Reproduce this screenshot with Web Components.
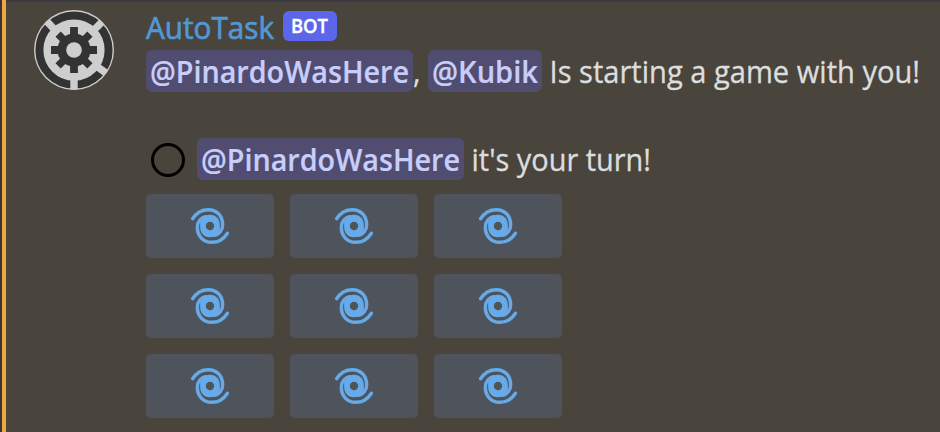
<!DOCTYPE html>
<html lang="en">
<head>
<meta charset="utf-8">
<title>AutoTask</title>
<style>
html,body{margin:0;height:100%;overflow:hidden;background:#49443c}
</style>
</head>
<body>
<chat-message></chat-message>
<script>
class BaseElement extends HTMLElement {
  constructor() {
    super();
    this.attachShadow({mode: 'open'}).innerHTML = this.constructor.html;
  }
}

// A single run of text, condensed so that it fills the given width.
class TextRun extends BaseElement {
  static html = `<style>:host{display:inline-block;white-space:pre;flex:none}span{display:inline-block;transform-origin:0 50%}</style><span><slot></slot></span>`;
  connectedCallback() {
    const width = Number(this.getAttribute('width'));
    const span = this.shadowRoot.querySelector('span');
    this.style.width = width + 'px';
    span.style.transform = `scaleX(${width / span.getBoundingClientRect().width})`;
  }
}
customElements.define('text-run', TextRun);

customElements.define('user-avatar', class extends BaseElement {
  static html = `<style>:host{display:block;width:80px;height:80px}svg{display:block}</style>
  <svg width="80" height="80" viewBox="-40 -40 80 80">
    <circle r="40" fill="#cecece"/>
    <circle r="34.6" fill="none" stroke="#333" stroke-width="8"/>
    <g stroke="#cecece" stroke-width="7.4">
      <path d="M0 28V39.5M20 -20L27.8 -27.8M-20 -21L-27 -28.5M23 16.5L32 23"/>
    </g>
    <g fill="#333">
      <circle r="16.6"/>
      <path d="M-3.9 -23H3.9V23H-3.9ZM-23 -3.9V3.9H23V-3.9Z"/>
      <path transform="rotate(45)" d="M-3.7 -22.5H3.7V22.5H-3.7ZM-22.5 -3.7V3.7H22.5V-3.7Z"/>
    </g>
    <circle r="7.8" fill="#cecece"/>
  </svg>`;
});

customElements.define('bot-tag', class extends BaseElement {
  static html = `<style>:host{display:flex;box-sizing:border-box;width:54px;height:30px;padding-left:8px;border-radius:6px;background:#5b66ea;color:#fff;font-size:20px;font-weight:600;line-height:30px;-webkit-text-stroke:.4px #fff}</style><text-run width="37">BOT</text-run>`;
});

customElements.define('user-mention', class extends BaseElement {
  static html = `<style>:host{display:flex;flex:none;box-sizing:border-box;height:42px;padding:0 4px;border-radius:6px;background:#504d70;color:#c9cdfb;font-weight:600;line-height:42px;-webkit-text-stroke:.2px currentColor}</style><slot></slot>`;
});

customElements.define('circle-emoji', class extends BaseElement {
  static html = `<style>:host{display:block;box-sizing:border-box;flex:none;width:34px;height:34px;border:3px solid #000;border-radius:50%}</style>`;
});

customElements.define('cyclone-button', class extends BaseElement {
  static html = `<style>:host{display:flex;align-items:center;justify-content:center;height:64px;border-radius:5px;background:#4f545c}svg{display:block}</style>
  <svg width="44" height="44" viewBox="-66 -66 132 132" fill="none" stroke="#67aae9" stroke-width="10.5" stroke-linecap="round">
    <path d="M-52 -22C-40 -41 -23 -49 -5 -49C22 -49 38 -28 38 -4C38 14 26 25 14 28"/>
    <path d="M52 22C40 41 23 49 5 49C-22 49 -38 28 -38 4C-38 -14 -26 -25 -14 -28"/>
    <path fill="#67aae9" stroke="none" fill-rule="evenodd" d="M0 34C-19 34 -30 20 -29.500 3C-29.500 -5 -30 -10 -29 -17C-21 -29 -11 -34 0 -34C19 -34 30 -20 29.500 -3C29.500 5 30 10 29 17C21 29 11 34 0 34ZM12.500 0A12.500 12.500 0 1 0 -12.500 0A12.500 12.500 0 1 0 12.500 0Z"/>
  </svg>`;
});

customElements.define('game-board', class extends BaseElement {
  static html = `<style>:host{display:grid;grid-template-columns:repeat(3,128px);gap:16px}</style>${'<cyclone-button></cyclone-button>'.repeat(9)}`;
});

customElements.define('chat-message', class extends BaseElement {
  static html = `<style>
    :host{display:grid;grid-template-columns:80px 1fr;column-gap:32px;box-sizing:border-box;height:432px;padding:8px 0 0 28px;margin-left:2px;border-left:4px solid #f0a83e;background:#49443c;color:#dcddde;font:400 31.5px/42px "Open Sans",sans-serif;-webkit-text-stroke:.35px currentColor;box-shadow:-2px 0 #35353d,inset 0 2px #3b3942}
    user-avatar{margin-top:2px}
    .row{display:flex}
    .head{height:42px;gap:9px}
    .head bot-tag{margin-top:3px}
    .name{color:#5197d5;line-height:38px;-webkit-text-stroke:.7px #5197d5}
    .turn{margin-top:46px;margin-bottom:14px;align-items:center}
    circle-emoji{margin:1px 12px 0 5px}
  </style>
  <user-avatar></user-avatar>
  <div>
    <div class="row head"><text-run class="name" width="128">AutoTask</text-run><bot-tag></bot-tag></div>
    <div class="row"><user-mention><text-run width="259">@PinardoWasHere</text-run></user-mention><text-run width="15">, </text-run><user-mention><text-run width="106">@Kubik</text-run></user-mention><text-run width="378"> Is starting a game with you!</text-run></div>
    <div class="row turn"><circle-emoji></circle-emoji><user-mention><text-run width="259">@PinardoWasHere</text-run></user-mention><text-run width="187"> it's your turn!</text-run></div>
    <game-board></game-board>
  </div>`;
});
</script>
</body>
</html>
